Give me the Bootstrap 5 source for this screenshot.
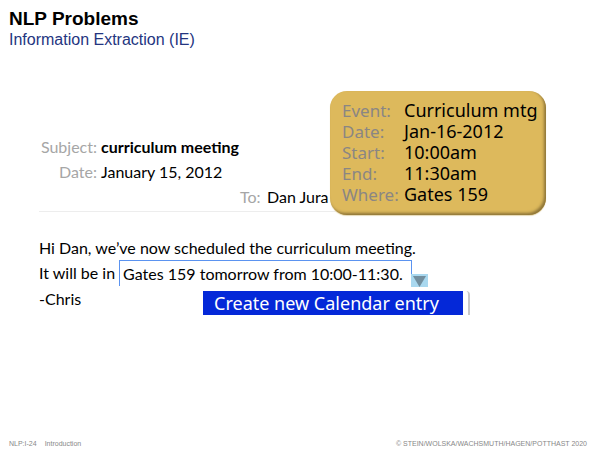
<!DOCTYPE html>
<html lang="en">
<head>
<meta charset="utf-8">
<meta name="viewport" content="width=device-width, initial-scale=1">
<title>NLP Problems</title>
<link rel="stylesheet" href="https://cdn.jsdelivr.net/npm/bootstrap@5.3.0/dist/css/bootstrap.min.css">
<style>
body { font-family: "Liberation Sans", Arial, sans-serif; color: #000; background: #fff; }
.slide-head { padding: 7px 9px 0; }
.slide-head h1 { font-size: 19px; line-height: 23px; font-weight: 700; }
.slide-head h2 { font-size: 16px; line-height: 20px; font-weight: 400; color: #24357f; }
.mail { margin: 84px 39px 0; font-family: Lato, sans-serif; font-size: 16px; line-height: 25px; }
.mail-head { width: 300px; border-bottom: 1px solid #ededed; padding-bottom: 2px; }
.mail-label { width: 58px; color: #a6a6a6; }
.mail-to { margin-left: 201px; }
.mail-to .mail-label { width: 23px; }
.mail-text { padding-top: 23px; white-space: nowrap; }
.found { border: 1px solid #5b93f0; border-bottom: 0; padding: 0 8px 0 3px; height: 26px; }
.found-toggle { left: 100%; top: 13px; width: 17px; height: 13px; background: #a9d8ef; }
.found-menu { left: 83px; top: 30px; width: 267px; height: 24px; padding-right: 5px; border-right: 2px solid #c9c9c9; border-top-right-radius: 4px; }
.found-menu button { background: #0428d8; color: #fff; font: 18px/24px "Noto Sans", sans-serif; padding: 0 0 0 11px; }
.event { left: 291px; top: -43px; width: 216px; height: 124px; padding: 9px 0 0 12px; border-radius: 17px; background: #ddb95c; box-shadow: inset -2px -2px 3px #8d7438, 0 1px 1px #e6d9b5; font: 18px/21px "Noto Sans", sans-serif; }
.event th { width: 62px; font-size: 17px; font-weight: 400; color: #8a8684; }
.event th, .event td { padding: 0; white-space: nowrap; }
.slide-foot { padding: 0 13px 0 9px; font-size: 7px; line-height: 12px; color: #888; }
</style>
<script defer src="https://cdn.jsdelivr.net/npm/bootstrap@5.3.0/dist/js/bootstrap.bundle.min.js"></script>
</head>
<body>
<div class="d-flex flex-column min-vh-100">
  <header class="slide-head">
    <h1 class="m-0">NLP Problems</h1>
    <h2 class="m-0">Information Extraction (IE)</h2>
  </header>
  <main class="mail position-relative">
    <div class="mail-head">
      <div class="d-flex gap-1"><span class="mail-label text-end">Subject:</span><strong>curriculum meeting</strong></div>
      <div class="d-flex gap-1"><span class="mail-label text-end">Date:</span><span>January 15, 2012</span></div>
      <div class="d-flex gap-1 mail-to"><span class="mail-label">To:</span><span>Dan Jura</span></div>
    </div>
    <div class="mail-text">
      <p class="m-0">Hi Dan, we’ve now scheduled the curriculum meeting.</p>
      <div class="d-flex">
        <span>It will be in</span>
        <div class="found position-relative ms-1">Gates 159 tomorrow from 10:00-11:30.
          <button type="button" class="found-toggle position-absolute border-0 p-0 d-flex justify-content-center" aria-label="Show actions"><svg width="13" height="13" viewBox="0 0 13 13"><path d="M0 2h13L6.500 13z" fill="#728e9e"/></svg></button>
          <div class="found-menu position-absolute d-flex"><button type="button" class="border-0 w-100 text-start">Create new Calendar entry</button></div>
        </div>
      </div>
      <p class="m-0">-Chris</p>
    </div>
    <aside class="event position-absolute">
      <table>
        <tbody>
          <tr><th scope="row">Event:</th><td>Curriculum mtg</td></tr>
          <tr><th scope="row">Date:</th><td>Jan-16-2012</td></tr>
          <tr><th scope="row">Start:</th><td>10:00am</td></tr>
          <tr><th scope="row">End:</th><td>11:30am</td></tr>
          <tr><th scope="row">Where:</th><td>Gates 159</td></tr>
        </tbody>
      </table>
    </aside>
  </main>
  <footer class="slide-foot mt-auto d-flex justify-content-between">
    <div class="d-flex gap-2"><span>NLP:I-24</span><span>Introduction</span></div>
    <span>© STEIN/WOLSKA/WACHSMUTH/HAGEN/POTTHAST 2020</span>
  </footer>
</div>
</body>
</html>
